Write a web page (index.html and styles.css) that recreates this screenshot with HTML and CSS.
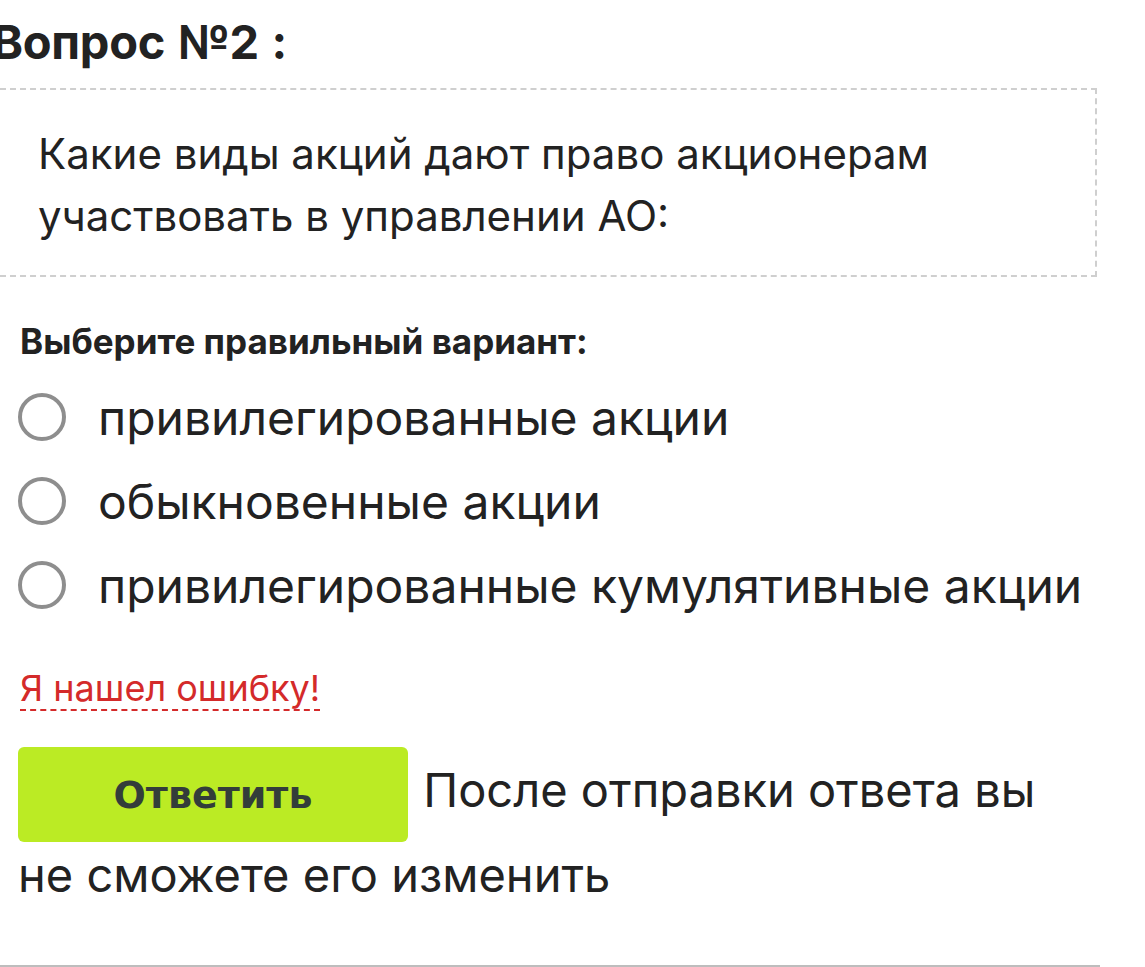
FILE: index.html
```html
<!DOCTYPE html>
<html lang="ru">

<head>
    <meta charset="UTF-8">
    <meta name="viewport" content="width=device-width, initial-scale=1.0">
    <title>Вопрос №2</title>
    <link rel="stylesheet" href="styles.css">
</head>

<body>
    <main class="quiz">
        <h2 class="quiz-title">Вопрос №2 :</h2>
        <div class="question">
            <p>Какие виды акций дают право акционерам участвовать в управлении АО:</p>
        </div>

        <h4 class="choose">Выберите правильный вариант:</h4>
        <ul class="answers">
            <li>
                <input class="radio" type="radio" name="answer" id="answer1">
                <label for="answer1">привилегированные акции</label>
            </li>
            <li>
                <input class="radio" type="radio" name="answer" id="answer2">
                <label for="answer2">обыкновенные акции</label>
            </li>
            <li>
                <input class="radio" type="radio" name="answer" id="answer3">
                <label for="answer3">привилегированные кумулятивные акции</label>
            </li>
        </ul>

        <a class="report" href="#">Я нашел ошибку!</a>

        <div class="submit">
            <button class="submit-btn">Ответить</button>
            После отправки ответа вы не сможете его изменить
        </div>
    </main>
</body>

</html>
```

FILE: styles.css
```css
h2,
h4,
p,
ul,
body {
    padding: 0px;
    margin: 0px;
}

body {
    font-family: Inter, 'Noto Sans', sans-serif;
    color: #222;
    background: #fff;
    overflow: hidden;
}

.quiz {
    width: 1100px;
    height: 965px;
    border-bottom: 2px solid #bdbdbd;
}

.quiz-title {
    margin-left: -8px;
    padding-top: 14px;
    font-size: 47px;
    font-weight: 700;
    line-height: 56px;
    letter-spacing: -0.3px;
    word-spacing: 2px;
}

.question {
    margin: 18px 0 0 -10px;
    width: 1107px;
    box-sizing: border-box;
    padding: 33px 20px 28px 46px;
    border: 2px dashed #cfcfcf;
}

.question p {
    font-size: 42px;
    line-height: 62px;
    max-width: 950px;
}

.choose {
    margin: 44px 0 0 20px;
    font-size: 35px;
    font-weight: 700;
    line-height: 40px;
}

.answers {
    list-style: none;
    margin: 14px 0 0 18px;
}

.answers li {
    display: flex;
    align-items: center;
    height: 84px;
}

.radio {
    appearance: none;
    margin: 0 32px 0 0;
    width: 48px;
    height: 48px;
    border: 4px solid #8e8e8e;
    border-radius: 50%;
    box-sizing: border-box;
}

.answers label {
    font-size: 48px;
}

.report {
    display: inline-block;
    margin: 40px 0 0 20px;
    font-size: 36px;
    line-height: 42px;
    color: #d42a2a;
    text-decoration: none;
    border-bottom: 2px dashed #d42a2a;
}

.submit {
    margin: 36px 0 0 18px;
    font-size: 47px;
    line-height: 66px;
}

.submit-btn {
    vertical-align: middle;
    width: 390px;
    height: 95px;
    margin-right: 2px;
    border: none;
    border-radius: 6px;
    background: #bbeb24;
    color: #333d3a;
    font-family: 'DejaVu Sans', sans-serif;
    font-size: 38px;
    font-weight: 700;
}
```
